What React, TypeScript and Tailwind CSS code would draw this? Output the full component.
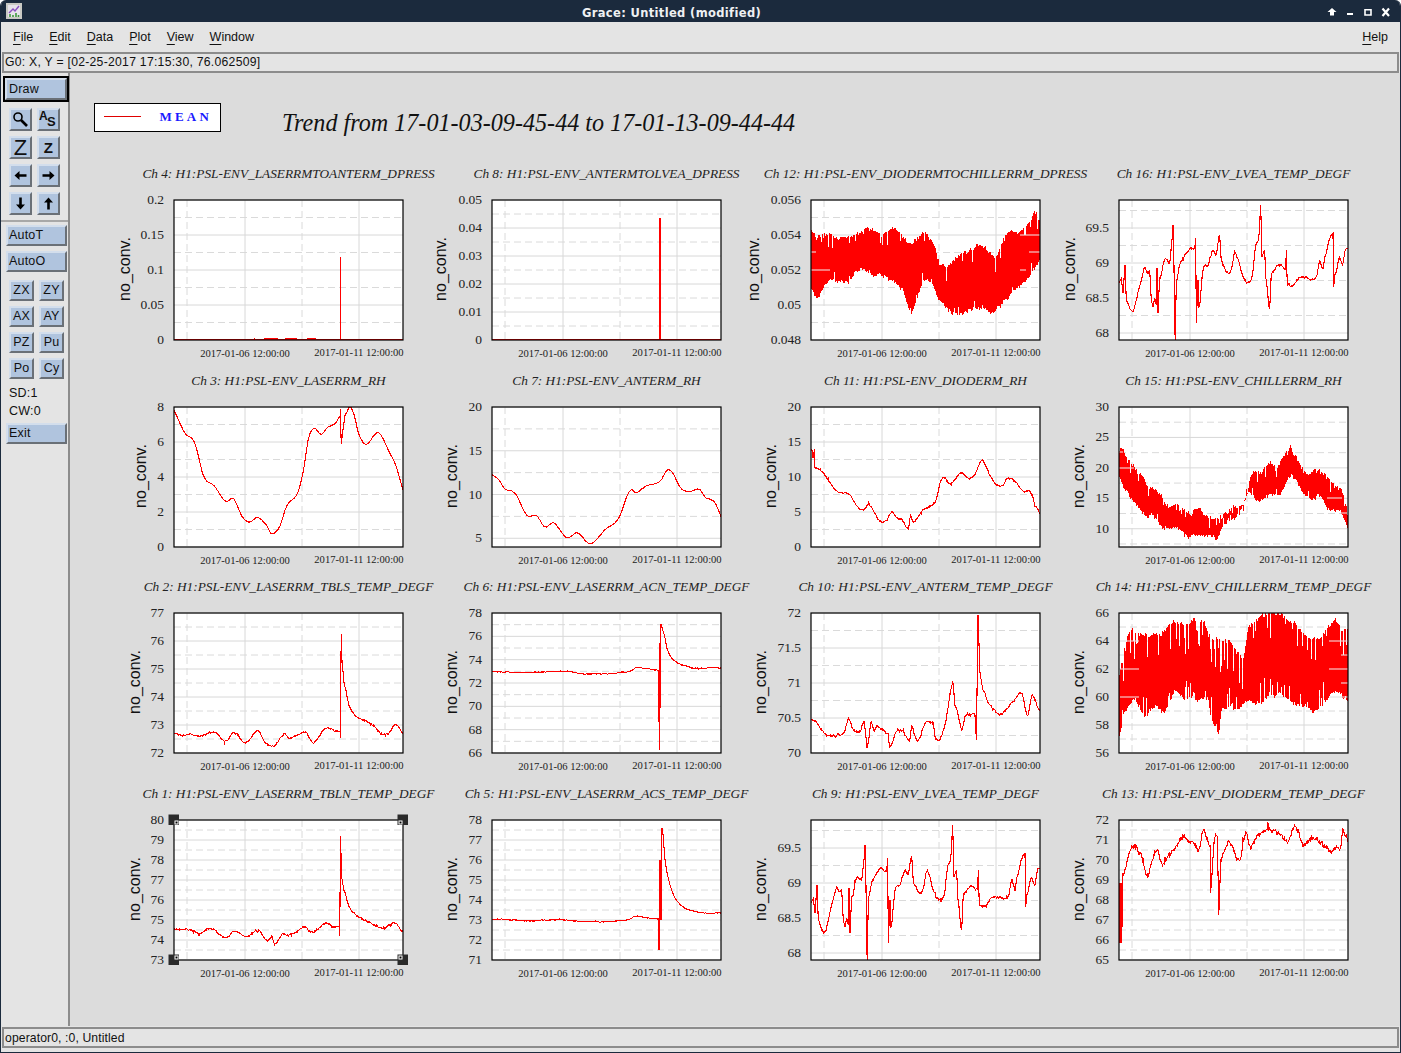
import { useId, type ReactNode } from "react";

type Pt = [number, number];
type Box = [number, number, number, number];

interface PlotCfg {
  title: string;
  max: number;
  min: number;
  major: number;
  labelX: number;
  box: Box;
  line?: Pt[];
  jitter?: number;
  upper?: Pt[];
  lower?: Pt[];
  notch?: number;
  nicks?: [number, number, number][];
  selected?: boolean;
}

const W = 229;
const H = 140;

const rng = (seed: number) => () => {
  seed = (seed + 0x6d2b79f5) | 0;
  let t = Math.imul(seed ^ (seed >>> 15), 1 | seed);
  t = (t + Math.imul(t ^ (t >>> 7), 61 | t)) ^ t;
  return ((t ^ (t >>> 14)) >>> 0) / 4294967296;
};

const toFrame = (box: Box, pts: Pt[]): Pt[] =>
  pts.map(([x, y]) => [((x - box[0]) / (box[2] - box[0])) * W, ((y - box[1]) / (box[3] - box[1])) * H]);

const interp = (pts: Pt[], x: number) => {
  for (let i = 1; i < pts.length; i++) {
    if (x <= pts[i][0]) {
      const [x0, y0] = pts[i - 1];
      const [x1, y1] = pts[i];
      return x1 === x0 ? y1 : y0 + ((x - x0) / (x1 - x0)) * (y1 - y0);
    }
  }
  return pts[pts.length - 1][1];
};

// slope at a key point, flat next to a spike so the curve doesn't overshoot
function tangent(pts: Pt[], i: number) {
  const a = pts[Math.max(0, i - 1)];
  const b = pts[Math.min(pts.length - 1, i + 1)];
  const c = pts[i];
  if ((i > 0 && c[0] - a[0] < 3) || (i < pts.length - 1 && b[0] - c[0] < 3)) return 0;
  return b[0] === a[0] ? 0 : (b[1] - a[1]) / (b[0] - a[0]);
}

function linePath(pts: Pt[], jitter: number, seed: number) {
  const r = rng(seed);
  let wander = 0;
  let d = `M${pts[0][0].toFixed(1)} ${pts[0][1].toFixed(1)}`;
  for (let i = 1; i < pts.length; i++) {
    const [x0, y0] = pts[i - 1];
    const [x1, y1] = pts[i];
    const dx = x1 - x0;
    if (dx < 3) {
      d += `L${x1.toFixed(1)} ${y1.toFixed(1)}`;
      continue;
    }
    const m0 = tangent(pts, i - 1) * dx;
    const m1 = tangent(pts, i) * dx;
    const n = Math.ceil(dx / 0.6);
    for (let k = 1; k <= n; k++) {
      const t = k / n;
      const t2 = t * t;
      const t3 = t2 * t;
      const y = (2 * t3 - 3 * t2 + 1) * y0 + (t3 - 2 * t2 + t) * m0 + (-2 * t3 + 3 * t2) * y1 + (t3 - t2) * m1;
      wander = (wander + (r() - 0.5) * jitter) * 0.92;
      const spike = r() < 0.03 ? (r() - 0.5) * jitter * 4 : 0;
      d += `L${(x0 + dx * t).toFixed(1)} ${(y + wander + spike + (r() - 0.5) * jitter).toFixed(1)}`;
    }
  }
  return d;
}

// one pixel column per x, so a notch in the envelope actually leaves a white gap
function bandPath(up: Pt[], lo: Pt[], notch: number, seed: number) {
  const r = rng(seed);
  const odds = notch > 20 ? 0.24 : 0.12;
  let d = "";
  let slowA = 0;
  let slowB = 0;
  for (let x = 0.5; x <= W; x += 1) {
    slowA = (slowA + (r() - 0.5) * 3.4) * 0.94;
    slowB = (slowB + (r() - 0.5) * 3.4) * 0.94;
    const a = interp(up, x) + slowA + (r() < odds ? r() * notch : r() * 3);
    const b = interp(lo, x) + slowB - (r() < odds * 0.8 ? r() * notch * 0.7 : r() * 3);
    d += `M${x} ${a.toFixed(1)}V${b.toFixed(1)}`;
  }
  return d;
}

const lvea: Pt[] = [
  [178, 280], [185, 265], [190, 310], [196, 225], [200, 330], [210, 355], [220, 370], [230, 330], [245, 265], [255, 230],
  [265, 245], [270, 240], [275, 330], [280, 350], [285, 325], [290, 345], [292, 235], [295, 370], [300, 260], [315, 210],
  [330, 220], [338, 140], [340, 105], [343, 230], [345, 410], [347, 450], [350, 270], [360, 220], [375, 195], [385, 180],
  [405, 178], [408, 145], [410, 400], [415, 270], [418, 350], [430, 240], [445, 225], [460, 180], [470, 190], [480, 135],
  [485, 215], [500, 245], [515, 235], [525, 185], [535, 205], [550, 255], [565, 275], [578, 255], [590, 160], [597, 150],
  [603, 45], [607, 200], [615, 180], [618, 265], [630, 355], [635, 250], [655, 230], [678, 240], [680, 180], [683, 285],
  [700, 285], [720, 262], [770, 258], [780, 212], [790, 235], [797, 195], [807, 150], [820, 130], [822, 290], [825, 255],
  [840, 200], [848, 225], [858, 180], [865, 175],
];

const plots: PlotCfg[] = [
  {
    title: "Ch 4: H1:PSL-ENV_LASERRMTOANTERM_DPRESS", max: 0.2, min: 0, major: 0.05, labelX: -46, box: [223, 122, 911, 541], jitter: 0,
    line: [[223, 541], [465, 541], [465, 537], [470, 541], [490, 541], [495, 538], [535, 538], [538, 541], [558, 541], [558, 538], [590, 538], [592, 541], [625, 541], [625, 538], [650, 538], [652, 541], [722, 541], [723, 292], [724, 541], [911, 541]],
  },
  {
    title: "Ch 8: H1:PSL-ENV_ANTERMTOLVEA_DPRESS", max: 0.05, min: 0, major: 0.01, labelX: -48, box: [0, 0, W, H], jitter: 0,
    line: [[0, 140], [167.5, 140], [168, 18], [168.5, 140], [229, 140]],
  },
  {
    title: "Ch 12: H1:PSL-ENV_DIODERMTOCHILLERRM_DPRESS", max: 0.056, min: 0.048, major: 0.002, labelX: -54, box: [185, 122, 872, 541], notch: 16,
    upper: [[185, 212], [195, 210], [200, 235], [240, 210], [260, 225], [300, 215], [345, 195], [380, 200], [400, 225], [440, 200], [470, 235], [490, 245], [530, 222], [550, 250], [570, 300], [590, 310], [640, 275], [690, 260], [740, 300], [770, 240], [810, 215], [840, 185], [858, 140], [872, 175]],
    lower: [[185, 390], [200, 430], [240, 360], [280, 380], [340, 325], [380, 365], [420, 370], [460, 400], [485, 480], [520, 370], [550, 390], [570, 435], [600, 455], [650, 455], [700, 455], [730, 460], [770, 400], [815, 380], [860, 320], [872, 310]],
    nicks: [[0, 70, 19], [0, 52, 5], [209, 35, 229], [209, 70, 215], [218, 52, 229]],
  },
  { title: "Ch 16: H1:PSL-ENV_LVEA_TEMP_DEGF", max: 69.9, min: 67.9, major: 0.5, labelX: -46, box: [178, 30, 865, 450], line: lvea, jitter: 1.6 },

  {
    title: "Ch 3: H1:PSL-ENV_LASERRM_RH", max: 8, min: 0, major: 2, labelX: -30, box: [138, 38, 716, 457], jitter: 0.3,
    line: [[138, 48], [165, 115], [190, 145], [213, 245], [240, 275], [268, 320], [288, 312], [310, 365], [328, 382], [348, 370], [370, 390], [385, 418], [405, 395], [422, 335], [450, 295], [465, 225], [478, 130], [492, 102], [510, 120], [525, 100], [545, 88], [557, 68], [558, 45], [560, 150], [565, 100], [570, 60], [582, 38], [592, 60], [605, 120], [623, 150], [648, 118], [660, 122], [680, 170], [697, 210], [716, 285]],
  },
  {
    title: "Ch 7: H1:PSL-ENV_ANTERM_RH", max: 20, min: 4, major: 5, labelX: -37, box: [942, 38, 1520, 457], jitter: 0.3,
    line: [[942, 240], [958, 255], [975, 283], [1000, 295], [1030, 362], [1055, 365], [1075, 397], [1098, 385], [1130, 430], [1158, 415], [1190, 447], [1228, 405], [1262, 370], [1285, 298], [1295, 285], [1305, 295], [1330, 275], [1365, 262], [1385, 226], [1400, 240], [1418, 280], [1438, 292], [1465, 285], [1482, 310], [1505, 325], [1520, 368]],
  },
  {
    title: "Ch 11: H1:PSL-ENV_DIODERM_RH", max: 20, min: 0, major: 5, labelX: -37, box: [155, 38, 735, 457], jitter: 1,
    line: [[157, 165], [160, 190], [164, 165], [165, 220], [190, 240], [220, 290], [250, 300], [275, 340], [290, 345], [302, 330], [325, 375], [345, 380], [360, 350], [372, 370], [385, 375], [402, 400], [407, 360], [412, 380], [440, 345], [470, 320], [487, 250], [510, 268], [535, 235], [552, 252], [570, 240], [588, 195], [605, 235], [622, 268], [640, 278], [652, 252], [675, 265], [693, 292], [708, 288], [716, 305], [722, 335], [735, 355]],
  },
  {
    title: "Ch 15: H1:PSL-ENV_CHILLERRM_RH", max: 30, min: 7, major: 5, labelX: -37, box: [935, 38, 1513, 457], notch: 12,
    upper: [[935, 170], [940, 150], [960, 195], [985, 235], [1010, 275], [1040, 295], [1060, 335], [1080, 325], [1115, 365], [1140, 345], [1165, 370], [1190, 360], [1220, 330], [1258, 290], [1270, 222], [1295, 232], [1315, 195], [1335, 215], [1368, 145], [1385, 190], [1410, 235], [1430, 218], [1460, 245], [1495, 280], [1513, 345]],
    lower: [[935, 245], [950, 295], [985, 340], [1020, 355], [1050, 395], [1080, 400], [1115, 430], [1140, 420], [1180, 450], [1200, 400], [1240, 370], [1260, 310], [1295, 320], [1320, 295], [1345, 298], [1370, 255], [1410, 325], [1445, 305], [1475, 355], [1490, 355], [1513, 405]],
    nicks: [[0, 61, 15], [0, 45, 4], [208, 91, 223], [222, 106, 229]],
  },

  {
    title: "Ch 2: H1:PSL-ENV_LASERRM_TBLS_TEMP_DEGF", max: 77, min: 72, major: 1, labelX: -36, box: [138, 40, 716, 460], jitter: 1,
    line: [[138, 402], [160, 405], [180, 400], [205, 408], [240, 396], [270, 425], [290, 396], [318, 430], [348, 396], [370, 430], [392, 440], [415, 408], [430, 420], [470, 396], [490, 430], [520, 385], [557, 397], [558, 415], [560, 102], [562, 185], [568, 260], [580, 320], [600, 352], [635, 368], [660, 398], [680, 398], [697, 372], [716, 402]],
  },
  {
    title: "Ch 6: H1:PSL-ENV_LASERRM_ACN_TEMP_DEGF", max: 78, min: 66, major: 2, labelX: -37, box: [942, 40, 1520, 460], jitter: 0.5,
    line: [[942, 215], [960, 216], [980, 218], [1030, 218], [1100, 215], [1140, 216], [1190, 222], [1290, 215], [1305, 204], [1363, 210], [1364, 450], [1365, 130], [1367, 325], [1368, 72], [1375, 100], [1385, 150], [1400, 180], [1430, 198], [1465, 207], [1500, 204], [1520, 207]],
  },
  {
    title: "Ch 10: H1:PSL-ENV_ANTERM_TEMP_DEGF", max: 72, min: 70, major: 0.5, labelX: -47, box: [155, 40, 735, 460], jitter: 1.6,
    line: [[157, 358], [180, 390], [195, 405], [225, 405], [240, 395], [250, 362], [262, 395], [280, 395], [290, 360], [297, 445], [308, 370], [315, 395], [322, 378], [350, 405], [354, 445], [370, 405], [385, 392], [405, 420], [410, 375], [425, 420], [445, 368], [465, 375], [470, 420], [480, 420], [495, 375], [515, 250], [520, 320], [537, 390], [545, 350], [570, 342], [574, 420], [578, 45], [583, 220], [590, 270], [605, 315], [640, 340], [665, 310], [688, 285], [703, 350], [715, 295], [735, 340]],
  },
  {
    title: "Ch 14: H1:PSL-ENV_CHILLERRM_TEMP_DEGF", max: 66, min: 56, major: 2, labelX: -37, box: [935, 40, 1513, 460], notch: 34,
    upper: [[935, 230], [945, 150], [965, 90], [985, 100], [1010, 115], [1040, 110], [1075, 68], [1100, 90], [1150, 55], [1170, 120], [1210, 105], [1250, 170], [1262, 75], [1315, 50], [1350, 60], [1400, 100], [1440, 110], [1480, 55], [1513, 75]],
    lower: [[935, 420], [950, 350], [975, 300], [1000, 355], [1030, 325], [1050, 345], [1075, 285], [1110, 320], [1160, 305], [1165, 360], [1187, 405], [1195, 325], [1235, 340], [1260, 310], [1330, 300], [1400, 320], [1450, 320], [1485, 280], [1513, 310]],
    nicks: [[1, 56, 20], [1, 84, 20], [7, 28, 20], [210, 28, 229], [210, 56, 229], [210, 84, 229], [222, 42, 229], [222, 70, 229]],
  },

  {
    title: "Ch 1: H1:PSL-ENV_LASERRM_TBLN_TEMP_DEGF", max: 80, min: 73, major: 1, labelX: -36, box: [223, 122, 911, 541], jitter: 1, selected: true,
    line: [[223, 448], [270, 447], [300, 457], [335, 447], [380, 472], [405, 452], [440, 472], [475, 452], [500, 485], [518, 475], [525, 495], [550, 462], [570, 466], [615, 443], [632, 460], [650, 455], [680, 430], [700, 442], [720, 442], [721, 468], [723, 170], [727, 295], [735, 340], [750, 385], [775, 412], [810, 425], [825, 440], [855, 445], [885, 428], [911, 455]],
  },
  {
    title: "Ch 5: H1:PSL-ENV_LASERRM_ACS_TEMP_DEGF", max: 78, min: 71, major: 1, labelX: -37, box: [0, 0, W, H], jitter: 0.5,
    line: [[0, 99], [30, 101], [70, 100], [100, 102], [135, 100], [145, 97], [166, 99], [167, 130], [168, 40], [169, 100], [170, 8], [173, 40], [178, 65], [186, 82], [198, 90], [212, 93], [229, 93]],
  },
  { title: "Ch 9: H1:PSL-ENV_LVEA_TEMP_DEGF", max: 69.9, min: 67.9, major: 0.5, labelX: -47, box: [178, 30, 865, 450], line: lvea, jitter: 1.6 },
  {
    title: "Ch 13: H1:PSL-ENV_DIODERM_TEMP_DEGF", max: 72, min: 65, major: 1, labelX: -37, box: [935, 30, 1513, 450], jitter: 3.2,
    line: [[935, 400], [936, 220], [937, 400], [938, 220], [939, 400], [940, 220], [941, 400], [942, 220], [943, 350], [944, 210], [945, 190], [965, 120], [990, 135], [1005, 190], [1030, 125], [1045, 165], [1075, 110], [1105, 70], [1125, 100], [1135, 125], [1148, 70], [1165, 110], [1166, 250], [1175, 110], [1183, 80], [1187, 315], [1192, 150], [1212, 95], [1240, 155], [1255, 70], [1268, 115], [1290, 70], [1345, 80], [1360, 100], [1378, 50], [1400, 100], [1430, 80], [1465, 120], [1495, 105], [1500, 55], [1513, 95]],
  },
];

function Plot({ cfg, seed }: { cfg: PlotCfg; seed: number }) {
  const clip = useId();
  const { max, min, major } = cfg;
  const yOf = (v: number) => ((max - v) / (max - min)) * H;
  const first = Math.ceil(min / major - 1e-6);
  const last = Math.floor(max / major + 1e-6);
  const majors: number[] = [];
  for (let i = first; i <= last; i++) majors.push(i * major);
  const minors: number[] = [];
  for (let i = first - 1; i <= last; i++) {
    const v = (i + 0.5) * major;
    if (v > min && v < max) minors.push(v);
  }

  let trace = "";
  if (cfg.line) trace = linePath(toFrame(cfg.box, cfg.line), cfg.jitter ?? 0, seed);
  if (cfg.upper && cfg.lower) {
    trace = bandPath(toFrame(cfg.box, cfg.upper), toFrame(cfg.box, cfg.lower), cfg.notch ?? 10, seed);
  }

  return (
    <div className="flex w-[229px] flex-col items-center">
      <div className="h-[35px] whitespace-nowrap font-['Liberation_Serif',serif] text-[13.3px] leading-[18px] text-[#222] italic">
        {cfg.title}
      </div>
      <svg width={W} height={H} className="block shrink-0 overflow-visible">
        <rect width={W} height={H} fill="#fff" />
        {minors.map((v) => (
          <line key={v} x1="0" x2={W} y1={yOf(v)} y2={yOf(v)} stroke="#dadada" strokeDasharray="7 4" />
        ))}
        {majors.map((v) => (
          <line key={v} x1="0" x2={W} y1={yOf(v)} y2={yOf(v)} stroke="#d8d8d8" />
        ))}
        <line x1="13" x2="13" y1="0" y2={H} stroke="#dadada" strokeDasharray="7 4" />
        <line x1="128" x2="128" y1="0" y2={H} stroke="#dadada" strokeDasharray="7 4" />
        <line x1="71" x2="71" y1="0" y2={H} stroke="#d8d8d8" />
        <line x1="185" x2="185" y1="0" y2={H} stroke="#d8d8d8" />
        <clipPath id={clip}>
          <rect width={W} height={H} />
        </clipPath>
        <g clipPath={`url(#${clip})`}>
          <path
            d={trace}
            fill="none"
            stroke="#ff0000"
            strokeWidth={cfg.line ? 1.1 : 1}
            strokeLinejoin="miter"
            shapeRendering="crispEdges"
          />
          {cfg.nicks?.map(([x, y, x2]) => (
            <line key={`${x}-${y}`} x1={x} x2={x2} y1={y} y2={y} stroke="#f2f2f2" />
          ))}
        </g>
        <rect width={W} height={H} fill="none" stroke="#000" strokeWidth="1.2" />

        <g className="fill-[#222] font-['Liberation_Serif',serif] text-[13.5px]">
          {majors.map((v) => (
            <text key={v} x="-10" y={yOf(v) + 4} textAnchor="end">
              {String(+v.toFixed(4))}
            </text>
          ))}
        </g>
        <g className="fill-[#222] font-['Liberation_Serif',serif] text-[10.6px]">
          <text x="71" y="157" textAnchor="middle">2017-01-06 12:00:00</text>
          <text x="185" y="156" textAnchor="middle">2017-01-11 12:00:00</text>
        </g>
        <text
          transform={`translate(${cfg.labelX + 1.5} 69) rotate(-90)`}
          textAnchor="middle"
          className="fill-[#111] font-['Liberation_Sans',sans-serif] text-[16px]"
        >
          no_conv.
        </text>

        {cfg.selected &&
          ([[0, 0], [W, 0], [0, H], [W, H]] as Pt[]).map(([x, y]) => (
            <g key={`${x}${y}`}>
              <rect x={x - 5.5} y={y - 5.5} width="10.5" height="10.5" fill="#2a2a2a" />
              <rect x={x === 0 ? 1 : x - 4} y={y === 0 ? 1 : y - 4} width="3" height="3" fill="#000" stroke="#fff" />
            </g>
          ))}
      </svg>
    </div>
  );
}

const bevel =
  "border-2 border-t-[#d3deec] border-l-[#d3deec] border-r-[#6a7077] border-b-[#6a7077] bg-[#b0c4de]";

function Btn({ className, children }: { className: string; children: ReactNode }) {
  return <div className={`flex items-center ${bevel} ${className}`}>{children}</div>;
}

function IconBtn({ children }: { children: ReactNode }) {
  return <div className={`flex h-[23px] w-[23px] items-center justify-center overflow-hidden ${bevel}`}>{children}</div>;
}

function ArrowIcon({ rotate }: { rotate: number }) {
  return (
    <svg width="15" height="15" viewBox="0 0 15 15" style={{ transform: `rotate(${rotate}deg)` }}>
      <path d="M1.5 7.5 6.5 3v3.2h7v2.6h-7V12z" fill="#000" />
    </svg>
  );
}

function ToolBar() {
  const small = ["ZX", "ZY", "AX", "AY", "PZ", "Pu", "Po", "Cy"];
  return (
    <aside className="flex w-[69px] shrink-0 flex-col border-r-2 border-[#8c8c8c] bg-[#e4e4e4] text-[12.5px] tracking-[0.2px] text-[#111]">
      <div className="mt-[3px] ml-[2px] h-[26px] w-[66px] border-2 border-black">
        <Btn className="h-full w-full pl-[2px]">Draw</Btn>
      </div>
      <div className="mt-[6px] ml-[8px] grid grid-cols-[23px_23px] gap-x-[5px] gap-y-[5px]">
        <IconBtn>
          <svg width="17" height="17" viewBox="0 0 17 17" fill="none" stroke="#000">
            <circle cx="6" cy="6" r="4" strokeWidth="1.6" />
            <path d="m9 9 6 6" strokeWidth="2.6" />
          </svg>
        </IconBtn>
        <IconBtn>
          <span className="relative h-[19px] w-[19px] font-['Liberation_Sans',sans-serif] leading-none font-bold">
            <span className="absolute top-[0px] left-0 text-[12px]">A</span>
            <span className="absolute top-[5px] left-[8px] text-[13px]">S</span>
          </span>
        </IconBtn>
        <IconBtn>
          <span className="font-['Liberation_Sans',sans-serif] text-[22px] leading-none">Z</span>
        </IconBtn>
        <IconBtn>
          <span className="font-['Liberation_Sans',sans-serif] text-[15px] leading-none font-bold">Z</span>
        </IconBtn>
        <IconBtn><ArrowIcon rotate={0} /></IconBtn>
        <IconBtn><ArrowIcon rotate={180} /></IconBtn>
        <IconBtn><ArrowIcon rotate={270} /></IconBtn>
        <IconBtn><ArrowIcon rotate={90} /></IconBtn>
      </div>
      <div className="mt-[5px] border-t-2 border-[#a8a8a8]" />
      <div className="mt-[3px] ml-[5px] flex w-[61px] flex-col gap-[5px]">
        <Btn className="h-[21px] pl-[1px]">AutoT</Btn>
        <Btn className="h-[21px] pl-[1px]">AutoO</Btn>
      </div>
      <div className="mt-[8px] ml-[8px] grid grid-cols-[25px_25px] gap-x-[5px] gap-y-[5px]">
        {small.map((s) => (
          <Btn key={s} className="h-[21px] justify-center">{s}</Btn>
        ))}
      </div>
      <div className="mt-[5px] ml-[8px] flex flex-col leading-[18px]">
        <span>SD:1</span>
        <span>CW:0</span>
      </div>
      <Btn className="mt-[3px] ml-[5px] h-[21px] w-[61px] pl-[1px]">Exit</Btn>
    </aside>
  );
}

function Menu({ mark, rest }: { mark: string; rest: string }) {
  return (
    <span>
      <span className="underline underline-offset-[3px]">{mark}</span>
      {rest}
    </span>
  );
}

export default function App() {
  return (
    <div className="flex h-[1053px] w-[1401px] flex-col overflow-hidden rounded-t-[6px] border-x border-b border-[#1b2a3d] bg-[#e4e4e4] font-['Liberation_Sans',sans-serif]">
      {/* title bar */}
      <header className="relative flex h-[22px] shrink-0 items-center justify-center bg-[#1b2a3d] pt-[6px] pr-[58px]">
        <svg width="16" height="16" viewBox="0 0 16 16" className="absolute top-[3px] left-[5px]">
          <rect width="16" height="16" fill="#c9c9c4" />
          <rect x="2" y="2" width="12" height="12" fill="#e6e2ea" />
          <path d="M3 10 7 6l2 2 4-5" fill="none" stroke="#8a4fc0" strokeWidth="1.4" />
          <path d="M4 14v-3M7 14v-2M10 14v-4M12.5 14v-2" stroke="#3f9a3c" strokeWidth="1.6" />
        </svg>
        <span className="font-['DejaVu_Sans',sans-serif] text-[11.5px] font-bold tracking-[0.35px] text-[#eef0f2]">
          Grace: Untitled (modified)
        </span>
        <svg width="68" height="12" viewBox="0 0 68 12" className="absolute top-[7px] right-[9px]" fill="#fff">
          <path d="M9 1 13.5 5H11v3.5H7V5H4.500z" />
          <rect x="24" y="6" width="6" height="2" />
          <path d="M42 2.800h6V8h-6z" fill="none" stroke="#fff" strokeWidth="1.6" />
          <path d="m59.500 1.500 6.500 7.500m0-7.500L59.500 9" fill="none" stroke="#fff" strokeWidth="2.2" />
        </svg>
      </header>

      {/* menu */}
      <nav className="flex h-[30px] shrink-0 items-center gap-[16px] pr-[12px] pl-[12px] text-[12.5px] text-[#111]">
        <Menu mark="F" rest="ile" />
        <Menu mark="E" rest="dit" />
        <Menu mark="D" rest="ata" />
        <Menu mark="P" rest="lot" />
        <Menu mark="V" rest="iew" />
        <Menu mark="W" rest="indow" />
        <span className="ml-auto">
          <Menu mark="H" rest="elp" />
        </span>
      </nav>

      <div className="mx-[1px] flex h-[21px] shrink-0 items-center border-2 border-[#8c8c8c] pl-[1px] text-[12.2px] tracking-[0.27px] text-[#111]">
        G0: X, Y = [02-25-2017 17:15:30, 76.062509]
      </div>

      <div className="flex min-h-0 flex-1">
        <ToolBar />
        {/* canvas */}
        <main className="flex-1 bg-[#dcdcdc]">
          <div className="flex h-[92px] items-start pt-[30px] pl-[24px]">
            <div className="flex h-[29px] w-[127px] items-center border border-black bg-white pr-[8px] pb-[2px] pl-[9px]">
              <span className="h-px w-[39px] bg-[#e00000]" />
              <span className="ml-[18px] font-['Liberation_Serif',serif] text-[13px] font-bold tracking-[3.2px] text-[#1a1aff]">
                MEAN
              </span>
            </div>
            <h1 className="mt-[5px] ml-[61px] font-['Liberation_Serif',serif] text-[24.15px] leading-[30px] font-normal whitespace-nowrap text-[#111] italic">
              Trend from 17-01-03-09-45-44 to 17-01-13-09-44-44
            </h1>
          </div>
          <div className="grid grid-cols-[318px_319px_308px_229px] grid-rows-[207px_206px_207px_207px] pl-[104px]">
            {plots.map((p, i) => (
              <Plot key={p.title} cfg={p} seed={i * 37 + 11} />
            ))}
          </div>
        </main>
      </div>

      <div className="mx-[1px] mt-[1px] mb-[4px] flex h-[21px] shrink-0 items-center border-2 border-[#8c8c8c] pt-[1px] pl-[1px] text-[12.2px] tracking-[0.1px] text-[#111]">
        operator0, :0, Untitled
      </div>
    </div>
  );
}
